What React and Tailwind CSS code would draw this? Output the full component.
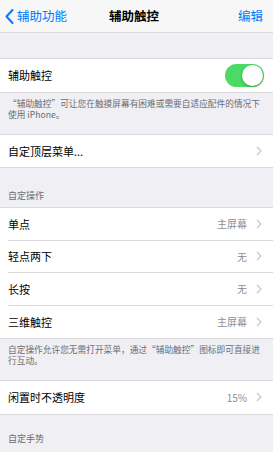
import React from "react";

const font = { fontFamily: '"Noto Sans CJK SC", "Noto Sans", sans-serif' };

const Chevron = () => (
  <svg width="6" height="10" viewBox="0 0 6 10" className="ml-[9px]">
    <path d="M1 1 L5 5 L1 9" fill="none" stroke="#c7c7cc" strokeWidth="1.2" />
  </svg>
);

const Row = ({ label, value, last, chevron = true, children }) => (
  <div className="flex h-[32.5px] bg-white pl-[8px]">
    <div
      className={`flex flex-1 items-center pr-[11px] ${
        last ? "" : "border-b border-[#d9d9de]"
      }`}
    >
      <span className="flex-1 text-[11px] text-black">{label}</span>
      {value && <span className="text-[10px] text-[#8e8e93]">{value}</span>}
      {chevron && <Chevron />}
      {children}
    </div>
  </div>
);

const Group = ({ children }) => (
  <div className="border-y border-[#d9d9de]">{children}</div>
);

const Toggle = () => (
  <div className="relative -mr-[2px] h-[23px] w-[39px] rounded-full bg-[#4cd964]">
    <div className="absolute right-[1px] top-[1px] h-[21px] w-[21px] rounded-full bg-white shadow-[0_1px_3px_rgba(0,0,0,0.3)]" />
  </div>
);

const Footer = ({ children, className }) => (
  <div className={`pl-[8px] pr-[6px] text-[8.7px] leading-[11px] text-[#6d6d72] ${className}`}>
    {children}
  </div>
);

const Header = ({ children, className }) => (
  <div className={`flex items-end px-[8px] pb-[5px] text-[9px] text-[#6d6d72] ${className}`}>
    {children}
  </div>
);

export default function App() {
  return (
    <div className="h-[452px] w-[273px] overflow-hidden bg-[#efeff4]" style={font}>
      <div className="flex h-[33px] items-center justify-between border-b border-[#d9d9de] bg-[#f7f7f7] px-[5px] pr-[10px]">
        <div className="flex w-[80px] items-center text-[12.5px] text-[#007aff]">
          <svg width="9" height="15" viewBox="0 0 9 15" className="mr-[3px]">
            <path d="M7.5 1 L1.5 7.5 L7.5 14" fill="none" stroke="#007aff" strokeWidth="2" strokeLinecap="round" strokeLinejoin="round" />
          </svg>
          辅助功能
        </div>
        <div className="text-[12.5px] font-semibold text-black">辅助触控</div>
        <div className="flex w-[80px] justify-end text-[12.5px] text-[#007aff]">编辑</div>
      </div>

      <div className="h-[25px]" />
      <Group>
        <Row label="辅助触控" chevron={false} last>
          <Toggle />
        </Row>
      </Group>
      <Footer className="pt-[5px] pb-[14px]">
        “辅助触控”可让您在触摸屏幕有困难或需要自适应配件的情况下使用 iPhone。
      </Footer>

      <Group>
        <Row label="自定顶层菜单..." last />
      </Group>

      <Header className="h-[39px]">自定操作</Header>
      <Group>
        <Row label="单点" value="主屏幕" />
        <Row label="轻点两下" value="无" />
        <Row label="长按" value="无" />
        <Row label="三维触控" value="主屏幕" last />
      </Group>
      <Footer className="pt-[5px] pb-[14px]">
        自定操作允许您无需打开菜单，通过“辅助触控”图标即可直接进行互动。
      </Footer>

      <Group>
        <Row label="闲置时不透明度" value="15%" last />
      </Group>

      <Header className="h-[36px]">自定手势</Header>
    </div>
  );
}
